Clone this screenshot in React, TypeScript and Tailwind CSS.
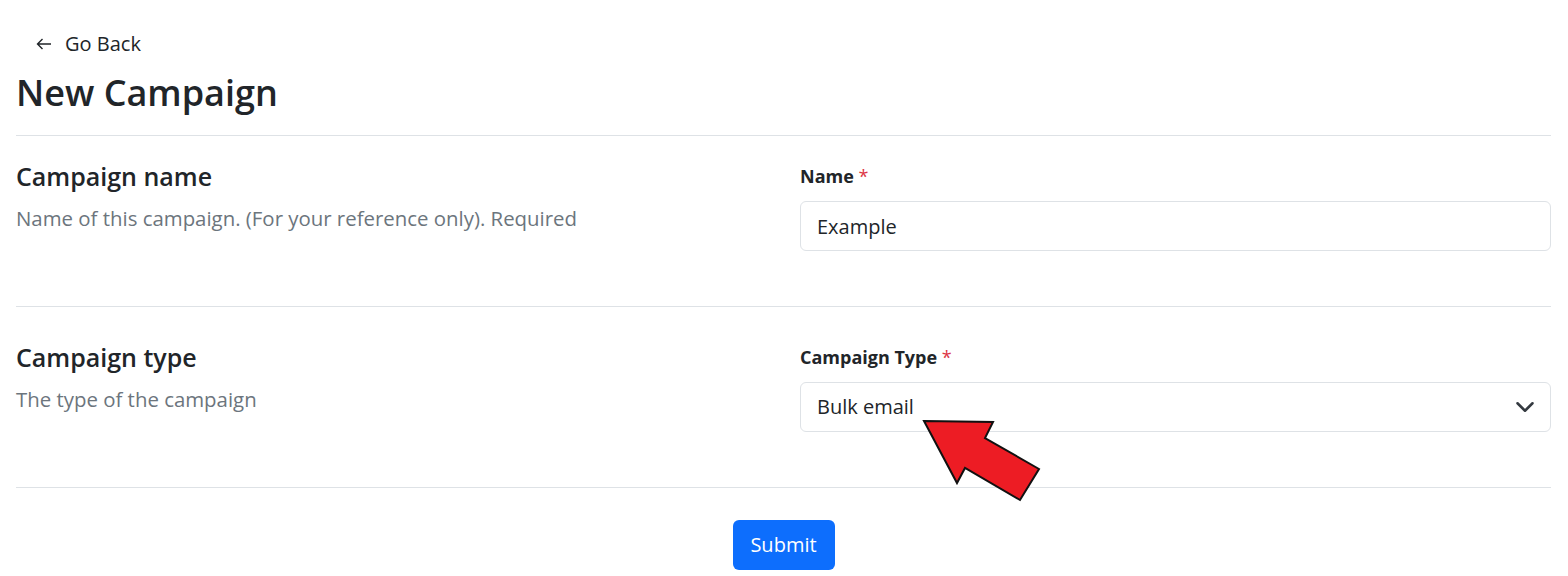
const font = { fontFamily: '"Segoe UI", "Open Sans", "Noto Sans", sans-serif' };

function Section({
  title,
  desc,
  label,
  top,
  children,
}: {
  title: string;
  desc: string;
  label: string;
  top: string;
  children: React.ReactNode;
}) {
  return (
    <section className={`flex border-b border-[#dee2e6] pb-[55px] ${top}`}>
      <div className="w-[784px] pr-4">
        <h2 className="text-[25px] leading-[32px] font-semibold text-[#212529]">{title}</h2>
        <p className="mt-[12px] text-[20.4px] leading-[28px] text-[#6c757d]">{desc}</p>
      </div>
      <div className="flex-1">
        <label className="block pt-[4px] text-[18px] leading-[24px] font-bold text-[#212529]">
          {label} <span className="text-[#dc3545] font-normal">*</span>
        </label>
        <div className="mt-[13px]">{children}</div>
      </div>
    </section>
  );
}

export default function App() {
  return (
    <main className="relative h-[576px] overflow-hidden bg-white text-[#212529]" style={font}>
      <div className="pl-4 pr-[17px]">
        <a href="#" className="ml-[20px] mt-[30px] flex items-center gap-[13px] text-[20px] leading-[28px] text-[#212529]">
          <svg width="16" height="16" viewBox="0 0 16 16" fill="none" stroke="currentColor" strokeWidth="1.4">
            <path d="M15 8H1.5M6.5 3 1.5 8l5 5" />
          </svg>
          Go Back
        </a>
        <h1 className="mt-[11px] mb-[18px] text-[36px] leading-[48px] font-semibold text-[#212529]">
          New Campaign
        </h1>
        <div className="border-t border-[#dee2e6]" />

        <Section
          top="pt-[24px]"
          title="Campaign name"
          desc="Name of this campaign. (For your reference only). Required"
          label="Name"
        >
          <input
            defaultValue="Example"
            className="block h-[50px] w-full rounded-[6px] border border-[#dee2e6] px-[16px] text-[20px] text-[#212529] outline-none"
          />
        </Section>

        <Section top="pt-[34px]" title="Campaign type" desc="The type of the campaign" label="Campaign Type">
          <div className="relative flex h-[50px] w-full items-center rounded-[6px] border border-[#dee2e6] px-[16px] text-[20px] text-[#212529]">
            Bulk email
            <svg
              className="absolute right-[15px] top-1/2 -translate-y-1/2"
              width="20"
              height="15"
              viewBox="0 2 16 12"
              fill="none"
              stroke="#343a40"
              strokeWidth="2"
              strokeLinecap="round"
              strokeLinejoin="round"
            >
              <path d="m2 5 6 6 6-6" />
            </svg>
          </div>
        </Section>

        <div className="flex justify-center pt-[32px]">
          <button className="h-[50px] w-[102px] rounded-[6px] bg-[#0d6efd] text-[20px] text-white">
            Submit
          </button>
        </div>
      </div>

      <svg className="absolute left-0 top-0 pointer-events-none" width="1568" height="576">
        <polygon
          points="924,421 993,422 985,438 1039,469 1020,500 965,468 957,483"
          fill="#ed1c24"
          stroke="#111"
          strokeWidth="2"
          strokeLinejoin="miter"
        />
      </svg>
    </main>
  );
}
